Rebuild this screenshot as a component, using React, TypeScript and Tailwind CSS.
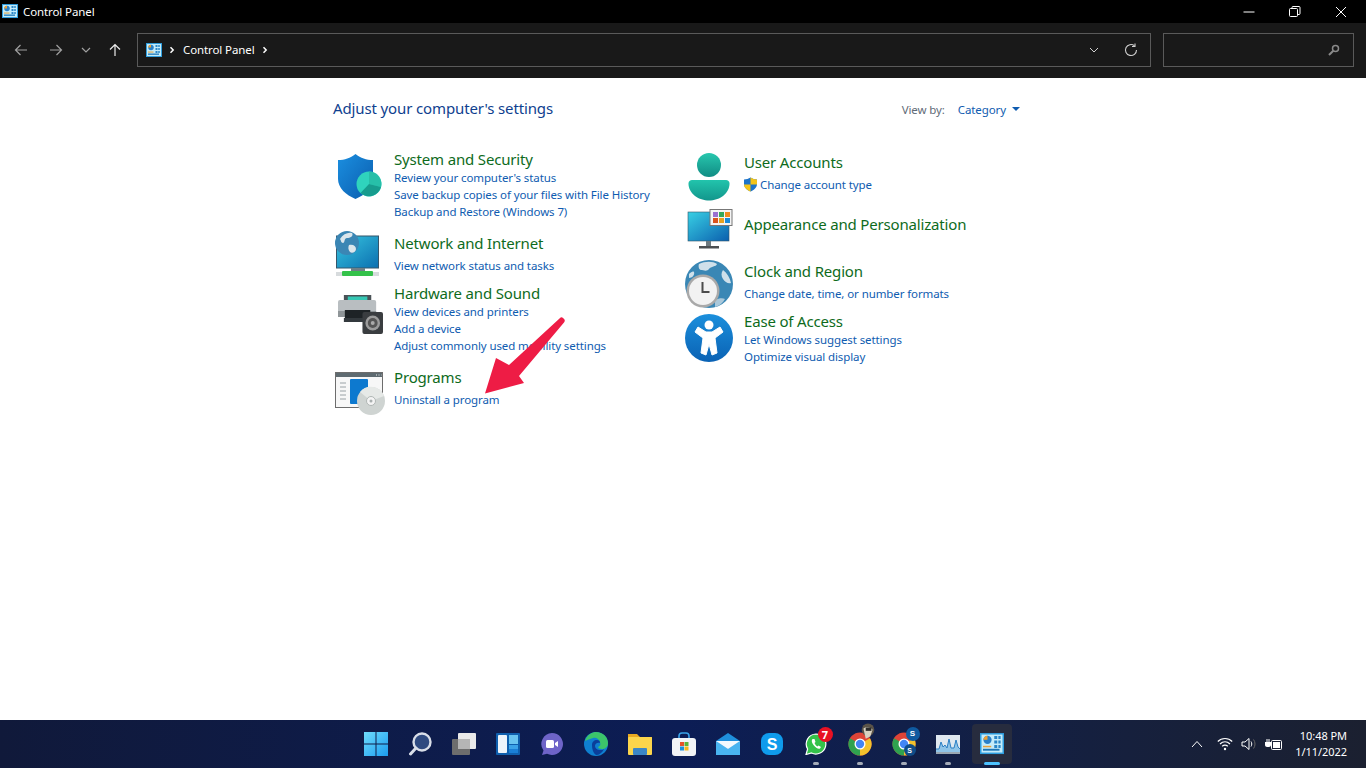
import React from "react";

const CpIcon = ({ s = 17 }: { s?: number }) => (
  <svg width={s} height={s * 0.88} viewBox="0 0 32 28">
    <rect x="0" y="0" width="32" height="28" fill="#2f9fe0" />
    <rect x="2" y="2" width="28" height="24" fill="#c4ecfa" />
    <circle cx="10" cy="9" r="5.500" fill="#2a80c8" />
    <path d="M10 9V3.500A5.500 5.500 0 0 0 4.500 9z" fill="#f0a030" />
    <path d="M19 4h4v4h-4zM24.500 4h3v4h-3zM19 10h4v4h-4zM24.500 10h3v4h-3zM19 16h4v4h-4zM24.500 16h3v4h-3z" fill="#2a86c8" />
    <path d="M4 17h11v2H4z" fill="#e8a33c" />
    <path d="M4 21h22v2.500H4z" fill="#1b75b6" />
  </svg>
);

const Chev = ({ className = "" }: { className?: string }) => (
  <svg width="8" height="8" viewBox="0 0 8 8" className={className}>
    <path d="M2.5 1.2 5.2 4 2.5 6.8" fill="none" stroke="#fff" strokeWidth="1.5" />
  </svg>
);

const Shield = () => (
  <svg width="48" height="48" viewBox="0 0 48 48" className="block">
    <defs>
      <linearGradient id="sh" x1="0" y1="0" x2="1" y2="1">
        <stop offset="0" stopColor="#1b8fe0" />
        <stop offset="1" stopColor="#0a5cad" />
      </linearGradient>
    </defs>
    <path d="M4 7c7 0 12-2 17.500-6C27 5 32 7 39 7v19c0 9-8 16-17.500 20C12 42 4 35 4 26z" fill="url(#sh)" />
    <circle cx="35" cy="31" r="12.500" fill="#2fd3bd" />
    <path d="M35 31 V18.500 A12.500 12.500 0 0 1 47 34z" fill="#27bfa9" />
    <path d="M35 31 L47 34 A12.500 12.500 0 0 1 26.500 40z" fill="#179c8e" />
  </svg>
);

const NetIcon = () => (
  <svg width="48" height="48" viewBox="0 0 48 48" className="block">
    <defs>
      <linearGradient id="nt" x1="0" y1="0" x2="1" y2="1">
        <stop offset="0" stopColor="#38c6e0" />
        <stop offset="1" stopColor="#0b6fb0" />
      </linearGradient>
    </defs>
    <rect x="1.500" y="6" width="42" height="32" fill="url(#nt)" stroke="#35566b" />
    <rect x="16" y="38" width="14" height="3" fill="#6f7f86" />
    <rect x="1" y="42" width="43" height="4" fill="#d7dbdd" />
    <rect x="7" y="41" width="31" height="5" rx="1" fill="#34c24a" />
    <circle cx="12" cy="13" r="12" fill="#3b86b4" />
    <path d="M5 9c3-5 8-7 12-6 2 3-2 5-5 5s-2 5-4 5-2-3-3-4zM14 15c4-1 7 1 7 4s-4 5-6 3-2-5-1-7z" fill="#dbe6ec" />
  </svg>
);

const PrinterIcon = () => (
  <svg width="45" height="39" viewBox="0 0 46 39" preserveAspectRatio="none" className="block">
    <path d="M6 0h28v5H6z" fill="#4a5257" />
    <path d="M10 1.500h20V5H10z" fill="#35c7b4" />
    <rect x="0" y="5" width="39" height="17" rx="2" fill="#b9bec1" />
    <rect x="0" y="16" width="39" height="6" fill="#8f9598" />
    <rect x="7" y="15" width="26" height="8" fill="#1e2326" />
    <rect x="6" y="23" width="30" height="4" fill="#33393d" />
    <rect x="25" y="17" width="21" height="22" rx="2" fill="#3a3d40" />
    <circle cx="35.500" cy="28" r="7.500" fill="#9c9c9c" />
    <circle cx="35.500" cy="28" r="5" fill="#555" />
    <circle cx="35.500" cy="28" r="2" fill="#aaa" />
  </svg>
);

const ProgIcon = () => (
  <svg width="50" height="44" viewBox="0 0 50 44" className="block">
    <rect x="0.500" y="0.500" width="47" height="35" fill="#f7f7f7" stroke="#6d6d6d" />
    <rect x="1" y="1" width="46" height="4" fill="#5e6a70" />
    <path d="M41 3h1M43.500 3h1M46 3h.5" stroke="#eee" />
    <path d="M5 11h6M5 15h6M5 19h6M5 23h6M5 27h6" stroke="#9aa2a6" />
    <rect x="15" y="7" width="18" height="25" rx="1" fill="#0d79cf" />
    <circle cx="36" cy="29" r="14" fill="#cfd4d2" />
    <path d="M36 29 L25 20 A14 14 0 0 1 49 24z" fill="#e6e9e7" />
    <circle cx="36" cy="29" r="4.500" fill="#f4f4f4" stroke="#b0b6b4" />
    <circle cx="36" cy="29" r="1.500" fill="#aab0b0" />
  </svg>
);

const UserIcon = () => (
  <svg width="48" height="50" viewBox="0 0 48 50" className="block">
    <defs>
      <linearGradient id="us" x1="0" y1="0" x2="0" y2="1">
        <stop offset="0" stopColor="#28c7ae" />
        <stop offset="1" stopColor="#108c84" />
      </linearGradient>
      <linearGradient id="us2" x1="0" y1="0" x2="0" y2="1">
        <stop offset="0" stopColor="#22c4ac" />
        <stop offset="1" stopColor="#12968c" />
      </linearGradient>
    </defs>
    <circle cx="25" cy="12" r="12" fill="url(#us)" />
    <path d="M8 27h34c2 0 3.500 1.500 3.500 3.500C45.500 41 35 47.500 25 47.500S4.500 41 4.500 30.500C4.500 28.500 6 27 8 27z" fill="url(#us2)" />
  </svg>
);

const UacShield = () => (
  <svg width="15" height="15" viewBox="0 0 15 15" className="block shrink-0">
    <path d="M7.500 0.500C9.500 1.800 11.500 2.300 14 2.500V7c0 3.500-3 6-6.500 7.500C4 13 1 10.500 1 7V2.500C3.500 2.300 5.500 1.800 7.500 .5z" fill="#1d74c9" />
    <path d="M7.500 .5C9.500 1.800 11.500 2.300 14 2.500V7.500H7.500z" fill="#f5c518" />
    <path d="M7.500 7.500V14.500C4 13 1 10.500 1 7.500z" fill="#f5c518" />
  </svg>
);

const AppearIcon = () => (
  <svg width="48" height="42" viewBox="0 0 48 42" className="block">
    <defs>
      <linearGradient id="ap" x1="0" y1="0" x2="1" y2="1">
        <stop offset="0" stopColor="#38d0e4" />
        <stop offset="1" stopColor="#0b5fae" />
      </linearGradient>
    </defs>
    <rect x="1" y="3" width="41" height="29" fill="url(#ap)" stroke="#33566a" strokeWidth=".6" />
    <rect x="19" y="32" width="5" height="5" fill="#6e7a80" />
    <rect x="12" y="37" width="20" height="2.500" fill="#4b4f52" />
    <rect x="23" y="0.500" width="22" height="16" fill="#f4f4f4" stroke="#777" />
    <rect x="26" y="3" width="5" height="5" fill="#9a6fd0" />
    <rect x="32" y="3" width="5" height="5" fill="#35a85a" />
    <rect x="38" y="3" width="5" height="5" fill="#f08c1e" />
    <rect x="26" y="9" width="5" height="5" fill="#d9531e" />
    <rect x="32" y="9" width="5" height="5" fill="#e8a21e" />
    <rect x="38" y="9" width="5" height="5" fill="#1b8ad8" />
  </svg>
);

const ClockGlobe = () => (
  <svg width="48" height="48" viewBox="0 0 48 48" className="block">
    <circle cx="24" cy="24" r="24" fill="#3a87b5" />
    <path d="M14 4c6-3 14-3 18 0-1 3-6 2-8 5s-6 1-8 1-3-4-2-6zM38 10c4 3 7 8 8 13-3 1-6-1-8-4s-2-6 0-9zM4 14c2-2 4-3 5-2 1 3-2 6-5 6z" fill="#cfe0ea" />
    <path d="M30 40c4-2 8-2 10-1-2 4-6 7-10 8z" fill="#aac8da" />
    <circle cx="18" cy="31" r="16.500" fill="#a9a9a9" />
    <circle cx="18" cy="31" r="14" fill="#f2f2f2" />
    <path d="M17.500 22v10h7" fill="none" stroke="#4b4b4b" strokeWidth="2" />
  </svg>
);

const AccessIcon = () => (
  <svg width="48" height="48" viewBox="0 0 48 48" className="block">
    <defs>
      <linearGradient id="ac" x1="0" y1="0" x2="0" y2="1">
        <stop offset="0" stopColor="#1b8fdc" />
        <stop offset="1" stopColor="#0a62b4" />
      </linearGradient>
    </defs>
    <circle cx="24" cy="24" r="24" fill="url(#ac)" />
    <circle cx="24" cy="11" r="4.500" fill="#fff" />
    <path d="M13 13 L10 18 L18 24 L16 39 L21 41 L24 30 L27 41 L32 39 L30 24 L38 18 L35 13 L27 18 H21z" fill="#fff" stroke="#fff" strokeLinejoin="round" />
  </svg>
);

type Cat = { title: string; links: React.ReactNode[]; icon: React.ReactNode; box: string; iconBox: string; linkBox: string };

const left: Cat[] = [
  { title: "System and Security", links: ["Review your computer's status", "Save backup copies of your files with File History", "Backup and Restore (Windows 7)"], icon: <Shield />, box: "h-[84px]", iconBox: "ml-[1px] mt-[5px]", linkBox: "mt-[-1px]" },
  { title: "Network and Internet", links: ["View network status and tasks"], icon: <NetIcon />, box: "h-[50px]", iconBox: "mt-[-2px] ml-[2px]", linkBox: "mt-[3px]" },
  { title: "Hardware and Sound", links: ["View devices and printers", "Add a device", "Adjust commonly used mobility settings"], icon: <PrinterIcon />, box: "h-[84px]", iconBox: "mt-[13px] ml-[5px]", linkBox: "mt-[-1px]" },
  { title: "Programs", links: ["Uninstall a program"], icon: <ProgIcon />, box: "h-[50px]", iconBox: "mt-[6px] ml-[2px]", linkBox: "mt-[3px]" },
];

const right: Cat[] = [
  { title: "User Accounts", links: [<span className="ml-[-1px] flex items-center gap-[2px]"><UacShield />Change account type</span>], icon: <UserIcon />, box: "h-[62px]", iconBox: "mt-[2px] ml-[1px]", linkBox: "mt-[3px]" },
  { title: "Appearance and Personalization", links: [], icon: <AppearIcon />, box: "h-[47px]", iconBox: "mt-[-4px] ml-[4px]", linkBox: "" },
  { title: "Clock and Region", links: ["Change date, time, or number formats"], icon: <ClockGlobe />, box: "h-[50px]", iconBox: "mt-[0px] ml-[2px]", linkBox: "mt-[3px]" },
  { title: "Ease of Access", links: ["Let Windows suggest settings", "Optimize visual display"], icon: <AccessIcon />, box: "h-[50px]", iconBox: "mt-[4px] ml-[2px]", linkBox: "mt-[-1px]" },
];

const Category = ({ c }: { c: Cat }) => (
  <div className={`flex ${c.box}`}>
    <div className="w-[61px] shrink-0">
      <div className={c.iconBox}>{c.icon}</div>
    </div>
    <div className="min-w-0">
      <div className="h-[22px] whitespace-nowrap text-[15px] leading-[22px] tracking-[-0.17px] text-[#0e6b1c]">{c.title}</div>
      <div className={c.linkBox}>
        {c.links.map((l, i) => (
          <div key={i} className="h-[17px] whitespace-nowrap text-[11.5px] leading-[17px] tracking-[-0.1px] text-[#0f5cb0]">{l}</div>
        ))}
      </div>
    </div>
  </div>
);

const TItem = ({ children, className = "" }: { children: React.ReactNode; className?: string }) => (
  <div className={`relative flex h-12 w-[44px] items-center justify-center ${className}`}>{children}</div>
);
const Dot = () => <div className="absolute bottom-[3px] left-1/2 h-[3px] w-[6px] -translate-x-1/2 rounded-full bg-[#a5acb8]" />;

const Chrome = () => (
  <svg width="24" height="24" viewBox="0 0 24 24" className="block">
    <circle cx="12" cy="12" r="11.500" fill="#de4437" />
    <path d="M12 12 L22 6.200 A11.500 11.500 0 0 1 12 23.500z" fill="#f3c22c" />
    <path d="M12 12 L12 23.500 A11.500 11.500 0 0 1 2 6.200z" fill="#2fa24f" />
    <circle cx="12" cy="12" r="5.500" fill="#fff" />
    <circle cx="12" cy="12" r="4.200" fill="#4285f4" />
  </svg>
);

export default function App() {
  return (
    <div className="relative flex h-screen w-full flex-col overflow-hidden bg-white font-['Noto_Sans','Open_Sans',sans-serif]">
      {/* title bar */}
      <div className="flex h-[23px] shrink-0 items-center bg-black text-white">
        <div className="ml-[2px]"><CpIcon s={16} /></div>
        <div className="ml-[5px] text-[11.5px] leading-[23px] tracking-[-0.1px]">Control Panel</div>
        <div className="ml-auto mr-[2px] flex items-center">
          <div className="flex w-[46px] justify-center"><svg width="12" height="12" viewBox="0 0 12 12"><path d="M.5 6h11" stroke="#fff" /></svg></div>
          <div className="flex w-[46px] justify-center"><svg width="12" height="12" viewBox="0 0 12 12" fill="none" stroke="#fff"><rect x=".5" y="2.500" width="8" height="8" rx="1" /><path d="M3 2.500V1.500a1 1 0 0 1 1-1h6a1 1 0 0 1 1 1v6a1 1 0 0 1-1 1H8.500" /></svg></div>
          <div className="flex w-[46px] justify-center"><svg width="12" height="12" viewBox="0 0 12 12"><path d="M1 1l10 10M11 1 1 11" stroke="#fff" /></svg></div>
        </div>
      </div>

      {/* address bar */}
      <div className="flex h-[55px] shrink-0 items-start bg-[#191919] pt-[10px]">
        <div className="flex h-[34px] w-[137px] shrink-0 items-center pl-[14px]">
          <svg width="14" height="14" viewBox="0 0 14 14" fill="none" stroke="#a0a0a0" strokeWidth="1.200"><path d="M13 7H1.500M6.500 2 1.500 7l5 5" /></svg>
          <svg width="14" height="14" viewBox="0 0 14 14" fill="none" stroke="#a0a0a0" strokeWidth="1.200" className="ml-[21px]"><path d="M1 7h11.500M7.500 2l5 5-5 5" /></svg>
          <svg width="10" height="8" viewBox="0 0 10 8" fill="none" stroke="#a0a0a0" strokeWidth="1.200" className="ml-[18px]"><path d="m1 2 4 4 4-4" /></svg>
          <svg width="14" height="14" viewBox="0 0 14 14" fill="none" stroke="#ececec" strokeWidth="1.200" className="ml-[17px]"><path d="M7 13V1.500M2 6.500l5-5 5 5" /></svg>
        </div>
        <div className="flex h-[34px] w-[1014px] shrink-0 items-center border border-[#5a5a5a] pl-[8px] text-white">
          <CpIcon s={16} />
          <Chev className="ml-[6px]" />
          <span className="ml-[7px] text-[11.5px] tracking-[-0.1px]">Control Panel</span>
          <Chev className="ml-[6px]" />
          <svg width="10" height="8" viewBox="0 0 10 8" fill="none" stroke="#d0d0d0" className="ml-auto"><path d="m1 2 4 4 4-4" /></svg>
          <svg width="14" height="14" viewBox="0 0 14 14" fill="none" stroke="#d0d0d0" strokeWidth="1.100" className="ml-[25px] mr-[12px]"><path d="M12.500 7A5.500 5.500 0 1 1 10.500 2.800" /><path d="M11 .5v3H8" /></svg>
        </div>
        <div className="ml-[12px] flex h-[34px] w-[191px] shrink-0 items-center justify-end border border-[#5a5a5a] pr-[13px]">
          <svg width="12" height="12" viewBox="0 0 12 12" fill="none" stroke="#8a8a8a" strokeWidth="1.500"><circle cx="7.500" cy="4.500" r="3" /><path d="M5.300 6.700 1 11" strokeWidth="2" /></svg>
        </div>
      </div>

      {/* content */}
      <div className="relative flex-1 bg-white">
        <div className="ml-[333px] w-[687px]">
          <div className="flex h-[62px] items-start justify-between pt-[19px]">
            <div className="text-[15px] leading-[22px] tracking-[-0.13px] text-[#0f3f8f]">Adjust your computer's settings</div>
            <div className="flex items-center pt-[4px] text-[11.5px] leading-[17px] tracking-[-0.1px]">
              <span className="text-[#5f6b78]">View by:</span>
              <span className="ml-[13px] text-[#0f5cb0]">Category</span>
              <svg width="8" height="4" viewBox="0 0 8 4" className="ml-[6px] mb-[2px]"><path d="M0 0h8L4 4z" fill="#0f5cb0" /></svg>
            </div>
          </div>
          <div className="mt-[8px] flex">
            <div className="w-[350px] shrink-0">{left.map((c) => <Category key={c.title} c={c} />)}</div>
            <div className="mt-[3px]">{right.map((c) => <Category key={c.title} c={c} />)}</div>
          </div>
        </div>
        {/* red annotation arrow */}
        <svg width="100" height="90" viewBox="0 0 100 90" className="absolute left-[475px] top-[233px]">
          <path d="M88 7 Q91 9 89 11.500 L44 65 L49 72 L10 82.500 L21 47 L34 54 L84.500 7.500 Q86.500 5.500 88 7z" fill="#ee1c45" />
        </svg>
      </div>

      {/* taskbar */}
      <div className="relative flex h-12 shrink-0 items-center justify-center bg-gradient-to-r from-[#10193a] via-[#0c1d55] to-[#1b2030]">
        <div className="ml-[1px] flex">
          <TItem>
            <svg width="24" height="24" viewBox="0 0 24 24"><defs><linearGradient id="w" x1="0" y1="0" x2="1" y2="1"><stop offset="0" stopColor="#6fdcfb" /><stop offset="1" stopColor="#1b9cf0" /></linearGradient></defs><path d="M0 0h11.500v11.500H0zM12.500 0H24v11.500H12.500zM0 12.500h11.500V24H0zM12.500 12.500H24V24H12.500z" fill="url(#w)" /></svg>
          </TItem>
          <TItem>
            <svg width="24" height="24" viewBox="0 0 24 24" fill="none"><circle cx="14" cy="10" r="8.500" fill="#2f4a80" stroke="#d9dee8" strokeWidth="2.400" /><path d="M8 16 2.500 22" stroke="#d9dee8" strokeWidth="3" strokeLinecap="round" /></svg>
          </TItem>
          <TItem>
            <svg width="24" height="22" viewBox="0 0 24 22"><rect x="6" y="0" width="18" height="16" rx="1" fill="#e9e9e9" /><rect x="0" y="6" width="18" height="16" rx="1" fill="#6d6d6d" /><rect x="6" y="6" width="12" height="10" fill="#b5b5b5" /></svg>
          </TItem>
          <TItem>
            <svg width="24" height="22" viewBox="0 0 24 22"><rect width="24" height="22" rx="1" fill="#0f5fae" /><rect x="2" y="2" width="9" height="18" rx="1" fill="#eef4fb" /><rect x="13" y="2" width="9" height="9" fill="#69c4f0" /><rect x="13" y="12" width="9" height="4" fill="#3aa2e8" /><rect x="13" y="16" width="9" height="4" fill="#1a7fd6" /></svg>
          </TItem>
          <TItem>
            <svg width="24" height="24" viewBox="0 0 24 24"><path d="M12 1a11 11 0 1 1-5 20.800L2 23l1.500-4.500A11 11 0 0 1 12 1z" fill="#6e64c8" /><rect x="6" y="8" width="8" height="8" rx="1.500" fill="#fff" /><path d="m15 11 3-2v6l-3-2z" fill="#fff" /></svg>
          </TItem>
          <TItem>
            <svg width="24" height="24" viewBox="0 0 24 24"><circle cx="12" cy="12" r="12" fill="#0f7fd0" /><path d="M1 9C3 2 9 0 12 0c7 0 12 5 12 11 0 4-3 6-6 6-2 0-4-1-4-2 2-1 3-2 2-5-1-3-4-5-7-4S3 8 1 9z" fill="#3cc46a" /><path d="M8 13c0-3 2-5 5-5 2 0 3 1 3 3-3-1-5 1-5 3s2 4 5 4c2 0 3 0 4-1-2 4-5 6-8 6-3-2-4-6-4-10z" fill="#0a3f9a" /></svg>
          </TItem>
          <TItem>
            <svg width="24" height="22" viewBox="0 0 24 22"><path d="M0 1h9l3 3h12v4H0z" fill="#e8a922" /><rect y="4" width="24" height="18" rx="1" fill="#fbd54c" /><rect x="5" y="15" width="14" height="7" rx="1" fill="#3b86c6" /></svg>
          </TItem>
          <TItem>
            <svg width="24" height="24" viewBox="0 0 24 24"><path d="M7 7V4a3 3 0 0 1 3-3h4a3 3 0 0 1 3 3v3" fill="none" stroke="#3aa2e8" strokeWidth="1.600" /><rect y="6" width="24" height="18" rx="3" fill="#f2f4f6" /><rect x="8" y="10" width="4" height="4" fill="#e5532a" /><rect x="12.500" y="10" width="4" height="4" fill="#5ab538" /><rect x="8" y="14.500" width="4" height="4" fill="#1b90dc" /><rect x="12.500" y="14.500" width="4" height="4" fill="#f5b81c" /></svg>
          </TItem>
          <TItem>
            <svg width="24" height="22" viewBox="0 0 24 22"><path d="M12 0 24 8v14H0V8z" fill="#1f8fdc" /><path d="M0 8l12 8 12-8v14H0z" fill="#49b4f0" /><path d="M0 8l12 8 12-8" fill="#fff" fillOpacity=".95" /></svg>
          </TItem>
          <TItem>
            <svg width="22" height="22" viewBox="0 0 22 22"><rect width="22" height="22" rx="8" fill="#0f9bec" /><text x="11" y="17" textAnchor="middle" fontSize="16" fontWeight="700" fill="#fff" fontFamily="'Liberation Sans',sans-serif">S</text></svg>
          </TItem>
          <TItem>
            <svg width="22" height="22" viewBox="0 0 22 22"><path d="M11 1a10 10 0 1 1-4.500 19L1 21.500 2.600 16A10 10 0 0 1 11 1z" fill="#34c24a" stroke="#fff" strokeWidth="1.200" /><path d="M7.500 6c-1 1-1.200 3 1 6s5 4.500 6.500 3.500l1-1.500-2.500-1.500-1 1c-1-.5-2.500-2-3-3.500l1-1L9.500 6z" fill="#fff" /></svg>
            <div className="absolute left-[24px] top-[7px] flex h-[15px] w-[15px] items-center justify-center rounded-full bg-[#e81123] text-[11px] font-bold leading-none text-white">7</div>
            <Dot />
          </TItem>
          <TItem>
            <Chrome />
            <svg width="16" height="20" viewBox="0 0 14 16" className="absolute left-[22px] top-[2px]"><circle cx="7" cy="6" r="5.500" fill="#5a5348" /><path d="M3 5c2-2 6-2 8 1l-2 6-4 2z" fill="#d8d2c2" /><path d="M5 4h5v3H5z" fill="#2a2a2a" /></svg>
            <Dot />
          </TItem>
          <TItem>
            <Chrome />
            <div className="absolute left-[24px] top-[7px] flex h-[14px] w-[14px] items-center justify-center rounded-full bg-[#0f5aa0] font-['Liberation_Sans',sans-serif] text-[8px] font-bold leading-none text-white">S</div>
            <div className="absolute left-[22px] top-[24px] flex h-[12px] w-[12px] items-center justify-center rounded-full bg-[#0f4c88] font-['Liberation_Sans',sans-serif] text-[7px] font-bold leading-none text-white">S</div>
            <Dot />
          </TItem>
          <TItem>
            <svg width="24" height="19" viewBox="0 0 24 19"><rect width="24" height="19" fill="#dfe8f0" /><path d="M0 14h3l2-7 2 5 2-2 2 3 2-9 2 9 3 0 2-8 2 7 2 2v5H0z" fill="#8fc4e8" /><path d="M0 14h3l2-7 2 5 2-2 2 3 2-9 2 9 3 0 2-8 2 7 2 2" fill="none" stroke="#2b7fc4" /><rect y="17" width="24" height="2" fill="#9aa7b2" /></svg>
            <Dot />
          </TItem>
          <TItem>
            <div className="absolute inset-x-[2px] inset-y-[4px] rounded-[4px] bg-[#272c3e]" />
            <div className="relative"><CpIcon s={24} /></div>
            <div className="absolute bottom-[3px] left-1/2 h-[3px] w-[16px] -translate-x-1/2 rounded-full bg-[#4cc2ff]" />
          </TItem>
        </div>
        {/* system tray */}
        <div className="absolute right-[19px] top-0 flex h-12 items-center text-white">
          <svg width="12" height="8" viewBox="0 0 12 8" fill="none" stroke="#fff" className="mr-[14px]"><path d="m1 7 5-5.500L11 7" /></svg>
          <svg width="16" height="14" viewBox="0 0 16 14" fill="none" stroke="#fff" strokeWidth="1.200" className="mr-[8px]"><path d="M.8 4.500c4-4 10.400-4 14.400 0M3 7c3-2.800 7-2.800 10 0M5.200 9.300c1.700-1.500 3.900-1.500 5.600 0" /><circle cx="8" cy="12" r="1.200" fill="#fff" stroke="none" /></svg>
          <svg width="16" height="14" viewBox="0 0 16 14" fill="none" stroke="#fff" className="mr-[8px]"><path d="M1 5h3l4-3.500v11L4 9H1z" /><path d="M10 4.500c1 1.500 1 3.500 0 5" /><path d="M12.500 2.500c2 2.500 2 6.500 0 9" stroke="#666" /></svg>
          <svg width="17" height="13" viewBox="0 0 17 13" className="mr-[15px]"><path d="M0 4h1.500V1h1v3h1V1h1v3H6v3c0 1-1 2-2 2H2C1 9 0 8 0 7z" fill="#fff" /><rect x="6.500" y="2.500" width="10" height="9" rx="1" fill="none" stroke="#fff" /><rect x="8" y="4" width="7" height="6" fill="#fff" /></svg>
          <div className="flex w-[50px] flex-col items-end text-[11px] leading-[16px] tracking-[-0.05px]">
            <span className="whitespace-nowrap">10:48 PM</span>
            <span className="whitespace-nowrap">1/11/2022</span>
          </div>
        </div>
      </div>
    </div>
  );
}
